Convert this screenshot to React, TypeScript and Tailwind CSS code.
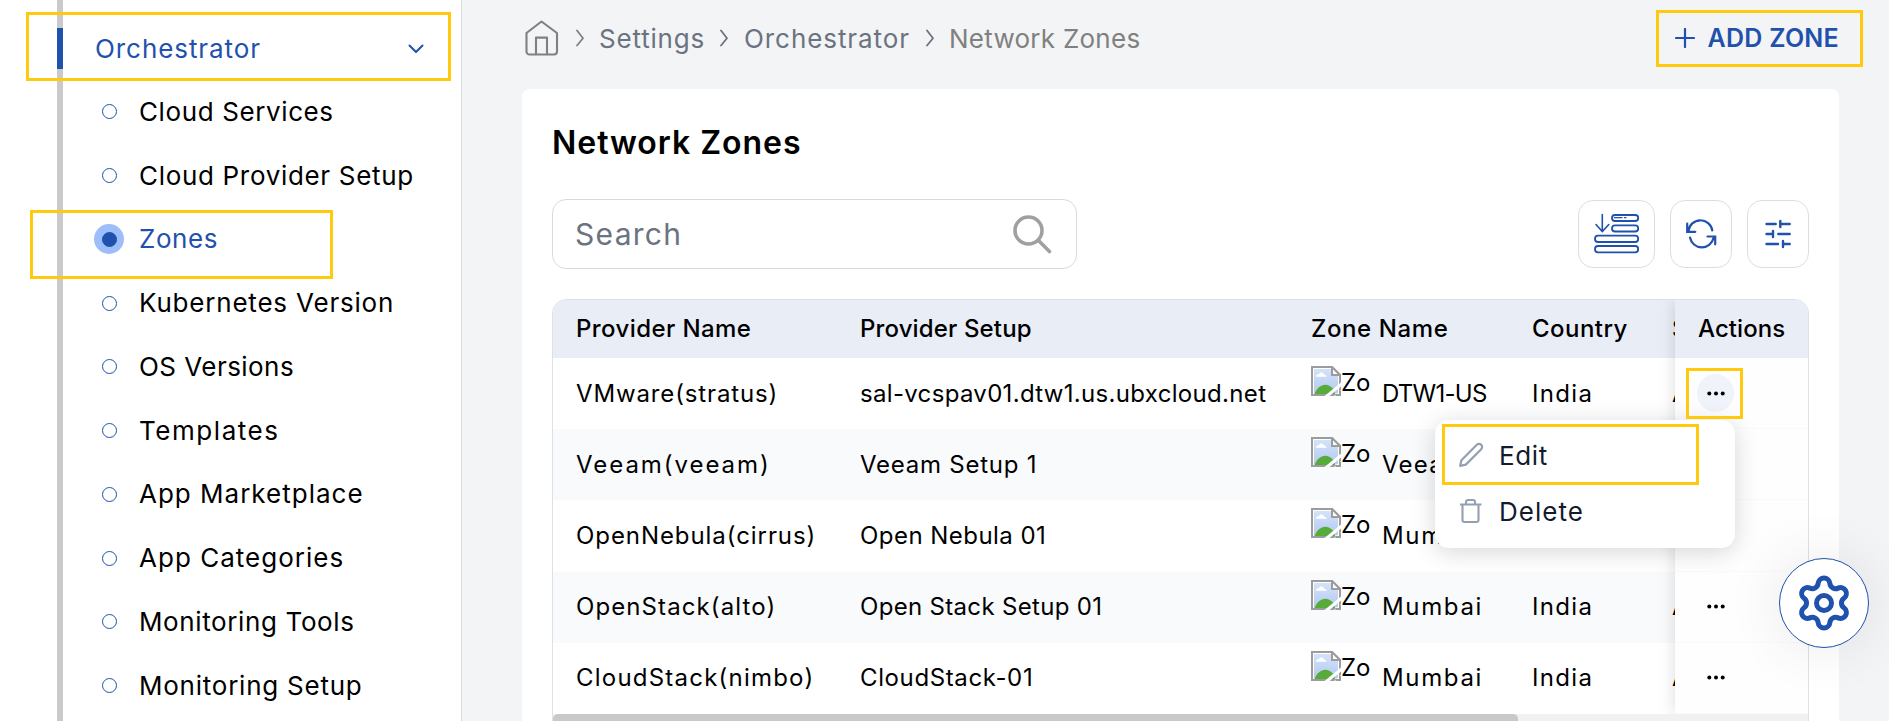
import { Settings } from "lucide-react";
import type { ReactNode } from "react";

const navItems = [
  { label: "Cloud Services", track: "tracking-[0.61px]" },
  { label: "Cloud Provider Setup", track: "tracking-[0.68px]" },
  { label: "Zones", track: "tracking-[0.55px]", active: true },
  { label: "Kubernetes Version", track: "tracking-[0.8px]" },
  { label: "OS Versions", track: "tracking-[0.45px]" },
  { label: "Templates", track: "tracking-[1.55px]" },
  { label: "App Marketplace", track: "tracking-[1px]" },
  { label: "App Categories", track: "tracking-[1.02px]" },
  { label: "Monitoring Tools", track: "tracking-[0.62px]" },
  { label: "Monitoring Setup", track: "tracking-[0.76px]" },
];

const rows = [
  {
    name: ["VMware(stratus)", "tracking-[0.86px]"],
    setup: ["sal-vcspav01.dtw1.us.ubxcloud.net", "tracking-[0.32px]"],
    zone: ["DTW1-US", "tracking-[-0.75px]"],
  },
  {
    name: ["Veeam(veeam)", "tracking-[1.95px]"],
    setup: ["Veeam Setup 1", "tracking-[0.75px]"],
    zone: ["Veeam", "tracking-[1.2px]"],
  },
  {
    name: ["OpenNebula(cirrus)", "tracking-[0.93px]"],
    setup: ["Open Nebula 01", "tracking-[0.46px]"],
    zone: ["Mumbai", "tracking-[1.66px]"],
  },
  {
    name: ["OpenStack(alto)", "tracking-[1.1px]"],
    setup: ["Open Stack Setup 01", "tracking-[0.32px]"],
    zone: ["Mumbai", "tracking-[1.66px]"],
  },
  {
    name: ["CloudStack(nimbo)", "tracking-[1.22px]"],
    setup: ["CloudStack-01", "tracking-[0.62px]"],
    zone: ["Mumbai", "tracking-[1.66px]"],
  },
];

const columns = "grid grid-cols-[284px_451px_221px_140px_200px] pl-[23px]";

function Chevron({ className }: { className: string }) {
  return (
    <svg className={`h-[18px] w-2 shrink-0 ${className}`} viewBox="0 0 8 18" fill="none" stroke="currentColor" strokeWidth="1.8" strokeLinecap="round" strokeLinejoin="round">
      <path d="M1 1.5 7 9.2 1 16.5" />
    </svg>
  );
}

function BrokenImage() {
  return (
    <svg className="size-[30px] shrink-0" viewBox="0 0 30 30">
      <defs>
        <linearGradient id="sky" x1="0" y1="0" x2="0" y2="1">
          <stop offset="0" stopColor="#d3e3fb" />
          <stop offset="1" stopColor="#b4c9ef" />
        </linearGradient>
      </defs>
      <path d="M1 1H21L29 9V29H1Z" fill="#fff" stroke="#9c9c9c" strokeWidth="2" />
      <path d="M3 3H20V10H27V27.500H3Z" fill="url(#sky)" />
      <path d="M5 10.8c0-2.2 1.800-2.800 2.800-2.300.9-2.900 5-2.500 5.200.2 1.800-.2 2.600.8 2.600 2.100Z" fill="#fff" />
      <path d="M3.500 28C7 18.600 16 15 23 23.500L24 28Z" fill="#57ab39" />
      <path d="M21 1V9H29Z" fill="#fff" stroke="#9c9c9c" strokeWidth="2" />
      <path d="M30 16.500 13.500 30H18.500L30 20.500Z" fill="#fff" />
      <path d="M23 30 30 24V30Z" fill="#fff" />
      <path d="M24.500 29H29V25" fill="none" stroke="#9c9c9c" strokeWidth="2" />
    </svg>
  );
}

function Dots() {
  return (
    <svg className="h-[5px] w-[18px]" viewBox="0 0 18 5" fill="#000">
      <circle cx="2.3" cy="2.5" r="2" />
      <circle cx="9" cy="2.5" r="2" />
      <circle cx="15.7" cy="2.5" r="2" />
    </svg>
  );
}

function ToolButton({ wide, children }: { wide?: boolean; children: ReactNode }) {
  return (
    <button className={`h-[68px] rounded-[15px] border border-[#dedede] text-[#1f51ad] ${wide ? "w-[77px]" : "w-[62px]"}`}>
      {children}
    </button>
  );
}

function Sidebar() {
  return (
    <aside className="flex w-[462px] shrink-0 border-r border-[#d9dadc] bg-white pl-[57px]">
      <div className="w-[6px] bg-[#cacaca] pt-[28px]">
        <div className="h-[41px] bg-[#1f51ad]" />
      </div>
      <nav className="flex-1 pt-[21px] text-[26px] leading-[56px] whitespace-nowrap">
        <div className="flex h-[59px] items-start pl-[32px] text-[#1f51ad]">
          <span className="w-[313px] tracking-[0.93px]">Orchestrator</span>
          <svg className="mt-[22px] h-[12px] w-[16px]" viewBox="0 0 16 12" fill="none" stroke="currentColor" strokeWidth="2" strokeLinecap="round" strokeLinejoin="round">
            <path d="M1.500 2.500 8 9 14.500 2.500" />
          </svg>
        </div>
        {navItems.map((item) => (
          <div key={item.label} className="flex h-[63.75px] items-center pl-[31px]">
            <span className={`flex size-[30px] items-center justify-center rounded-full ${item.active ? "bg-[#9dbefb]" : ""}`}>
              <span className={`size-[15px] rounded-full border border-[#1f51ad] ${item.active ? "bg-[#1f51ad]" : ""}`} />
            </span>
            <span className={`ml-[15px] ${item.track} ${item.active ? "text-[#1f51ad]" : "text-black"}`}>{item.label}</span>
          </div>
        ))}
      </nav>
    </aside>
  );
}

function Header() {
  return (
    <header className="flex h-[76px] items-center pl-[63px] text-[26px] whitespace-nowrap text-[#6b7280]">
      <svg className="h-[36px] w-[34px]" viewBox="0 0 34 36" fill="none" stroke="#808080" strokeWidth="2.100" strokeLinejoin="round">
        <path d="M16.500 1.500 32 13V31.500a3 3 0 0 1-3 3H4.500a3 3 0 0 1-3-3V13Z" />
        <path d="M11 34.500V17.600H22V34.500" />
      </svg>
      <Chevron className="ml-[17px] text-[#808080]" />
      <span className="ml-[15px] w-[106px] tracking-[0.82px]">Settings</span>
      <Chevron className="ml-[15px]" />
      <span className="ml-[16px] w-[167px] tracking-[0.93px]">Orchestrator</span>
      <Chevron className="ml-[15px]" />
      <span className="ml-[15px] tracking-[0.26px] text-[#808080]">Network Zones</span>
      <button className="mr-[50px] ml-auto flex items-center text-[25px] font-semibold tracking-[0.25px] text-[#1f51ad]">
        <svg className="mr-[13px] size-[20px]" viewBox="0 0 20 20" stroke="currentColor" strokeWidth="2.200" strokeLinecap="round">
          <path d="M10 1V19M1 10H19" />
        </svg>
        <span className="pt-[2px]">ADD ZONE</span>
      </button>
    </header>
  );
}

function Toolbar() {
  return (
    <div className="mt-[32px] flex h-[70px] items-center">
      <div className="flex h-[70px] w-[525px] items-center rounded-[14px] border border-[#dadada] pr-[24px] pl-[22px]">
        <span className="flex-1 text-[30px] tracking-[1.3px] text-[#6b7280]">Search</span>
        <svg className="size-[40px]" viewBox="0 0 40 40" fill="none" stroke="#a0a0a0" strokeWidth="3.600" strokeLinecap="round">
          <circle cx="16.500" cy="16.500" r="13.500" />
          <path d="M26.500 26.500 37.500 37.500" />
        </svg>
      </div>
      <div className="ml-auto flex gap-[15px]">
        <ToolButton wide>
          <svg className="h-[66px] w-[75px]" viewBox="9 11 75 66" fill="none" stroke="currentColor" strokeWidth="1.800" strokeLinecap="round">
            <path d="M32.300 24.500V41.200M26 34.500 32.300 41.500 38.800 34.500" strokeWidth="1.600" />
            <rect x="42" y="25" width="26.200" height="6" rx="3" />
            <rect x="42" y="35.300" width="26.200" height="6.200" rx="3" />
            <rect x="25" y="45.700" width="43.200" height="6.300" rx="3" />
            <rect x="25" y="56" width="43.200" height="6.300" rx="3" />
            <path d="M44.500 27.700H52M54.500 27.700H56" strokeWidth="1.300" />
          </svg>
        </ToolButton>
        <ToolButton>
          <svg className="h-[66px] w-[60px]" viewBox="101 11 60 66" fill="none" stroke="currentColor" strokeWidth="2.200" strokeLinecap="round">
            <path d="M142.300 40.500A12 12 0 0 0 118.500 41M117.200 33.500V41.800H125.300" />
            <path d="M120 47.500A12 12 0 0 0 143.500 48M137.500 46.500H145.200V54.300" />
          </svg>
        </ToolButton>
        <ToolButton>
          <svg className="h-[66px] w-[60px]" viewBox="178 11 60 66" fill="none" stroke="currentColor" strokeWidth="2.400" strokeLinecap="round">
            <path d="M196.500 34H205.700M210.300 34H219.700M210.300 31V37" />
            <path d="M196.500 44H203M208.300 44H219.700M203 41V47" />
            <path d="M196.500 54H208M213 54H219.700M213 51V57" />
          </svg>
        </ToolButton>
      </div>
    </div>
  );
}

function ZonesTable() {
  return (
    <div className="mt-[30px] flex h-[440px] flex-col overflow-hidden rounded-[14px] border border-[#dfe1e6] text-[24px] whitespace-nowrap text-black">
      <div className="flex">
        <div className="min-w-0 flex-1 overflow-hidden">
          <div className={`${columns} h-[58px] items-center bg-[#e8edf6] font-medium`}>
            <span className="tracking-[0.42px]">Provider Name</span>
            <span className="tracking-[0.14px]">Provider Setup</span>
            <span className="tracking-[0.6px]">Zone Name</span>
            <span className="tracking-[0.45px]">Country</span>
            <span>State</span>
          </div>
          {rows.map((row, i) => (
            <div key={row.name[0]} className={`${columns} h-[71.200px] items-center ${i % 2 ? "bg-[#f9fafc]" : "bg-white"}`}>
              <span className={row.name[1]}>{row.name[0]}</span>
              <span className={row.setup[1]}>{row.setup[0]}</span>
              <div className="flex h-full items-center">
                <div className="flex w-[71px] items-center self-start pt-[8px]">
                  <BrokenImage />
                  <span className="h-[30px] leading-[34px]">Zo</span>
                </div>
                <span className={row.zone[1]}>{row.zone[0]}</span>
              </div>
              <span className="tracking-[1.350px]">India</span>
              <span>Active</span>
            </div>
          ))}
        </div>
        <div className="relative z-10 w-[133px] shadow-[0_0_16px_rgba(0,0,0,0.14)]">
          <div className="flex h-[58px] items-center bg-[#e8edf6] pl-[23px] font-medium tracking-[0.07px]">Actions</div>
          {rows.map((row, i) => (
            <div key={row.name[0]} className="flex h-[71.200px] items-center border-b border-[#fafafa] bg-[#fefefe] pl-[22px]">
              <span className={`flex h-[38px] w-[37px] items-center justify-center rounded-full ${i === 0 ? "bg-[#f0f3f9]" : ""}`}>
                <Dots />
              </span>
            </div>
          ))}
        </div>
      </div>
      <div className="relative z-20 flex-1 bg-[#f1f1f1]">
        <div className="h-[12px] w-[965px] rounded-[5px] bg-[#c9c9c9]" />
      </div>
    </div>
  );
}

function ActionMenu() {
  return (
    <div className="absolute top-[420px] left-[1435px] z-20 h-[128px] w-[300px] rounded-[14px] bg-white pt-[7px] pl-[23px] text-[26px] text-[#141b2f] shadow-[0_4px_24px_rgba(0,0,0,0.16)]">
      <div className="flex h-[56px] items-center">
        <svg className="size-[26px]" viewBox="0 0 26 26" fill="none" stroke="#94a0b2" strokeWidth="2.200" strokeLinejoin="round">
          <path d="M2.200 23.800 3.400 18.200 18.800 2.800a3.100 3.100 0 0 1 4.400 4.400L7.800 22.600Z" />
        </svg>
        <span className="ml-[15px] tracking-[0.6px]">Edit</span>
      </div>
      <div className="flex h-[56px] items-center">
        <svg className="size-[26px]" viewBox="0 0 26 26" fill="none" stroke="#94a0b2" strokeWidth="2.100" strokeLinejoin="round">
          <path d="M4.500 6.500V22a2 2 0 0 0 2 2H18.500a2 2 0 0 0 2-2V6.500M2 6.500H23.500M8 6.500V4a2 2 0 0 1 2-2H15a2 2 0 0 1 2 2V6.500" />
        </svg>
        <span className="ml-[15px] tracking-[1px]">Delete</span>
      </div>
    </div>
  );
}

export default function App() {
  return (
    <div className="relative flex h-[721px] w-[1889px] overflow-hidden bg-[#f3f4f6] font-['Inter','Noto_Sans',sans-serif]">
      <Sidebar />
      <main className="min-w-0 flex-1">
        <Header />
        <section className="mt-[13px] mr-[50px] ml-[60px] h-[700px] rounded-lg bg-white px-[30px] pt-[30px]">
          <h1 className="h-[48px] text-[32px] leading-[48px] font-semibold tracking-[0.97px] text-black">Network Zones</h1>
          <Toolbar />
          <ZonesTable />
        </section>
      </main>

      <ActionMenu />
      <button className="absolute top-[558px] left-[1779px] z-20 flex size-[90px] items-center justify-center rounded-full border border-[#1f51ad] bg-white text-[#1f51ad] shadow-[0_0_60px_rgba(0,0,0,0.09)]">
        <Settings size={60} strokeWidth={2} />
      </button>

      <div className="absolute top-[12px] left-[26px] h-[69px] w-[425px] border-3 border-[#ffc90e]" />
      <div className="absolute top-[210px] left-[30px] h-[69px] w-[303px] border-3 border-[#ffc90e]" />
      <div className="absolute top-[10px] left-[1656px] h-[57px] w-[207px] border-3 border-[#ffc90e]" />
      <div className="absolute top-[368px] left-[1686px] z-30 h-[51px] w-[57px] border-3 border-[#ffc90e]" />
      <div className="absolute top-[424px] left-[1442px] z-30 h-[61px] w-[257px] border-3 border-[#ffc90e]" />
    </div>
  );
}
